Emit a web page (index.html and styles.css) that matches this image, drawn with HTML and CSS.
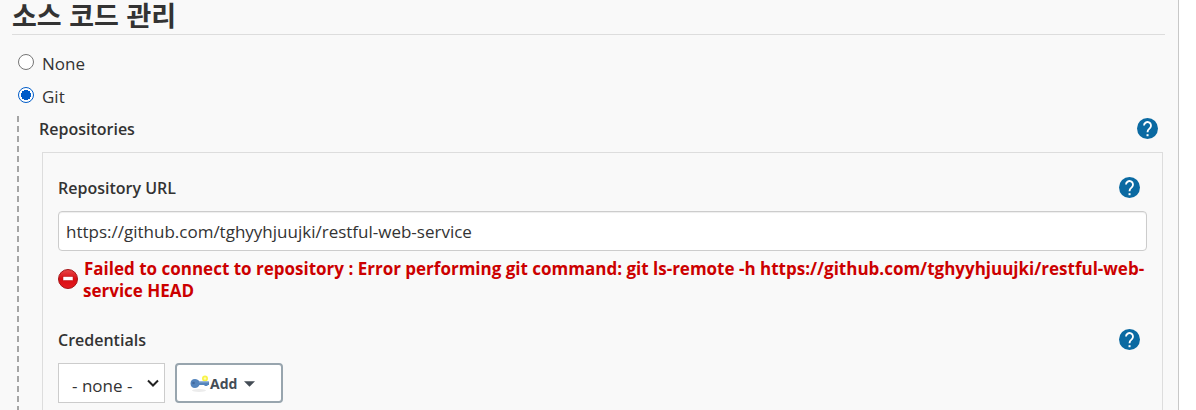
FILE: index.html
```html
<!DOCTYPE html>
<html lang="ko">
<head>
<meta charset="utf-8">
<title>소스 코드 관리</title>
<link rel="stylesheet" href="styles.css">
</head>
<body>
<svg class="sprite" aria-hidden="true">
  <symbol id="help" viewBox="0 0 24 24">
    <circle cx="12" cy="12" r="12" fill="#0b6aa2"/>
    <path d="M8 8.600a4 4 0 1 1 6.600 3.100c-1.600 1.300-2.600 2-2.600 4.600" fill="none" stroke="#fff" stroke-width="2.100"/>
    <rect x="10.900" y="18.500" width="2.300" height="2.300" fill="#fff"/>
  </symbol>
</svg>
<main class="panel">
  <h1 class="title">소스 코드 관리</h1>
  <form class="scm">
    <label class="option"><input class="radio" type="radio" name="scm"><span>None</span></label>
    <label class="option"><input class="radio" type="radio" name="scm" checked><span>Git</span></label>
    <section class="git">
      <div class="row">
        <h2 class="label">Repositories</h2>
        <button class="help" type="button" aria-label="Help for Repositories"><svg class="help-icon"><use href="#help"/></svg></button>
      </div>
      <div class="repository">
        <div class="row">
          <label class="label" for="url">Repository URL</label>
          <button class="help" type="button" aria-label="Help for Repository URL"><svg class="help-icon"><use href="#help"/></svg></button>
        </div>
        <input class="url" id="url" type="text" value="https://github.com/tghyyhjuujki/restful-web-service">
        <div class="error">
          <svg class="error-icon" viewBox="0 0 20 20" aria-hidden="true">
            <defs><linearGradient id="red" x2="0" y2="1"><stop offset="0" stop-color="#e84a4a"/><stop offset=".5" stop-color="#d80d12"/><stop offset="1" stop-color="#e51b20"/></linearGradient></defs>
            <circle cx="10" cy="10" r="9.500" fill="url(#red)" stroke="#a51518"/>
            <rect x="5" y="7.500" width="10" height="4" fill="#fff" stroke="#b80c10" stroke-width=".5"/>
          </svg>
          <p class="error-text">Failed to connect to repository : Error performing git command: git ls-remote -h https://github.com/tghyyhjuujki/restful-web-service HEAD</p>
        </div>
        <div class="row">
          <label class="label" for="credentials">Credentials</label>
          <button class="help" type="button" aria-label="Help for Credentials"><svg class="help-icon"><use href="#help"/></svg></button>
        </div>
        <div class="controls">
          <div class="select-wrap">
            <select class="select" id="credentials"><option>- none -</option></select>
            <svg class="chevron" viewBox="0 0 12 8" aria-hidden="true"><path d="M1 1.500l5 5 5-5" fill="none" stroke="#222" stroke-width="2"/></svg>
          </div>
          <button class="add" type="button">
            <svg class="key" viewBox="0 0 20 18" aria-hidden="true">
              <ellipse cx="9" cy="15.500" rx="7" ry="1.500" fill="#ececec"/>
              <circle cx="15" cy="3.500" r="3" fill="#f8f34a"/><circle cx="15" cy="3.500" r="1.200" fill="#fffbb0"/>
              <path d="M5 4c2 0 3.500 1 4.500 2.500H19v3.500h-1.500v1h-3v-1H9.500C8.500 12 7 13 5 13 2 13 .5 11 .5 8.500S2 4 5 4z" fill="#5585bd"/>
              <path d="M9 7h9.500" stroke="#8daed6" stroke-width="1"/><circle cx="3.500" cy="8" r="1.300" fill="#41699f"/>
            </svg>
            <span>Add</span>
            <svg class="caret" viewBox="0 0 10 5" aria-hidden="true"><path d="M0 0h10L5 5z" fill="#444c55"/></svg>
          </button>
        </div>
      </div>
    </section>
  </form>
</main>
</body>
</html>
```
FILE: styles.css
```css
* { box-sizing: border-box; }
body {
  margin: 0;
  height: 100vh;
  overflow: hidden;
  padding-right: 17px;
  background: #fff;
  color: #333;
  font: 17px/24px "Open Sans", "Noto Sans CJK KR", sans-serif;
}
.sprite { display: none; }
.panel {
  display: flex;
  flex-direction: column;
  min-height: 100vh;
  padding: 0 13px 0 12px;
  background: #f9f9f9;
  border-right: 1px solid #c8c8c8;
}
.title {
  margin: 0;
  height: 35px;
  border-bottom: 1px solid #ddd;
  font: bold 27px/30px "Noto Sans CJK KR", sans-serif;
}
.scm {
  display: flex;
  flex: 1;
  flex-direction: column;
  padding-top: 12px;
}
.option {
  display: flex;
  align-items: center;
  gap: 8px;
  height: 33px;
  padding: 0 6px;
}
.radio {
  appearance: none;
  width: 16px;
  height: 16px;
  margin: 0 0 3px;
  border: 1px solid #767676;
  border-radius: 50%;
  background: #fff;
}
.radio:checked {
  border-color: #005cc8;
  background: radial-gradient(circle, #005cc8 5px, #fff 5px);
}
.git {
  display: flex;
  flex: 1;
  flex-direction: column;
  margin: 3px 0 0 5px;
  padding: 0 2px 0 22px;
  background: repeating-linear-gradient(#a5a5a5 0 6px, transparent 6px 10px) left top / 2px 100% no-repeat;
}
.row {
  display: flex;
  align-items: center;
  justify-content: space-between;
  height: 23px;
  padding-right: 7px;
}
.label {
  margin: 0;
  font-size: 16px;
  font-weight: 600;
}
.help {
  width: 21px;
  height: 21px;
  padding: 0;
  border: 0;
  background: none;
}
.help-icon {
  display: block;
  width: 21px;
  height: 21px;
}
.git > .row {
  margin: 1px 0 12px;
  padding-right: 5px;
}
.repository {
  flex: 1;
  margin-left: 3px;
  padding: 23px 15px 0;
  border: 1px solid #ddd;
  border-bottom: 0;
}
.url {
  display: block;
  width: 100%;
  height: 40px;
  margin-top: 12px;
  padding: 0 7px;
  border: 1px solid #ccc;
  border-radius: 4px;
  background: #fff;
  box-shadow: inset 0 1px 1px #eee;
  color: #333;
  font: inherit;
}
.error {
  display: flex;
  align-items: center;
  gap: 5px;
  margin: 7px 0 26px;
  color: #c00;
  font-weight: bold;
  line-height: 22px;
}
.error-icon {
  flex: none;
  width: 20px;
  height: 20px;
  margin-bottom: 2px;
}
.error-text {
  margin: 0;
  text-indent: 1px;
}
.controls {
  display: flex;
  gap: 10px;
  margin-top: 12px;
}
.select-wrap {
  display: grid;
  align-items: center;
}
.select, .chevron { grid-area: 1 / 1; }
.select {
  appearance: none;
  width: 107px;
  height: 40px;
  padding: 5px 13px 0;
  border: 1px solid #ccc;
  border-radius: 0;
  background: #fff;
  color: #333;
  font: inherit;
}
.chevron {
  justify-self: end;
  width: 12px;
  height: 8px;
  margin-right: 6px;
  pointer-events: none;
}
.add {
  display: flex;
  align-items: center;
  width: 108px;
  height: 40px;
  padding: 1px 13px 0;
  border: 2px solid #98a5ae;
  border-radius: 4px;
  background: #fff;
  color: #444c55;
  font: bold 14px/20px "Open Sans", sans-serif;
}
.key {
  width: 20px;
  height: 18px;
}
.caret {
  width: 11px;
  height: 6px;
  margin-left: 7px;
}
```
